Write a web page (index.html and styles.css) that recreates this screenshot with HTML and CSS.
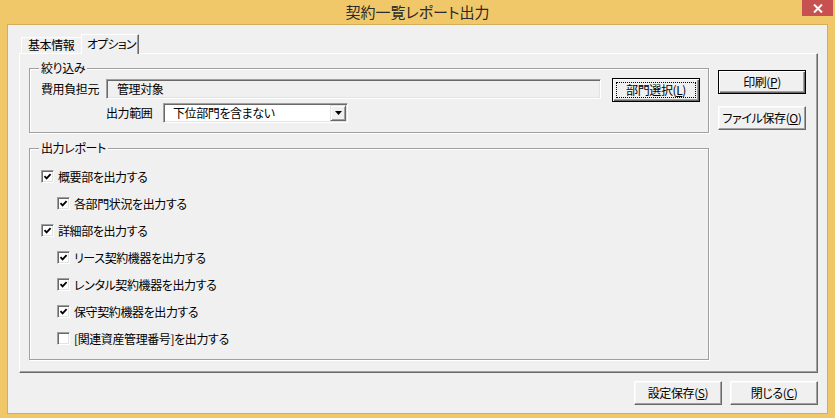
FILE: index.html
```html
<!DOCTYPE html>
<html lang="ja">
<head>
<meta charset="utf-8">
<title>契約一覧レポート出力</title>
<link rel="stylesheet" href="styles.css">
</head>
<body>
<div class="window">
  <div class="titlebar">
    <span></span>
    <div class="title">契約一覧レポート出力</div>
    <div class="close">
      <svg width="10" height="9" viewBox="0 0 10 9"><path d="M1 0.5 L9 8.5 M9 0.5 L1 8.5" stroke="#fff" stroke-width="2" fill="none"/></svg>
    </div>
  </div>
  <div class="client">
    <div class="tabs">
      <div class="tab">基本情報</div>
      <div class="tab active">オプション</div>
    </div>
    <div class="panel">
      <div class="groups">
        <div class="group g1">
          <span class="legend">絞り込み</span>
          <div class="row r1">
            <span class="lbl">費用負担元</span>
            <div class="field">管理対象</div>
            <button class="btn default focus">部門選択(<u>L</u>)</button>
          </div>
          <div class="row r2">
            <span class="lbl">出力範囲</span>
            <div class="combo">
              <span class="combo-text">下位部門を含まない</span>
              <span class="combo-btn"><svg width="7" height="4" viewBox="0 0 7 4"><path d="M0 0 H7 L3.5 4 Z" fill="#000"/></svg></span>
            </div>
          </div>
        </div>
        <div class="group g2">
          <span class="legend">出力レポート</span>
          <div class="chk"><span class="box on"><svg width="9" height="9" viewBox="0 0 9 9"><path d="M1.5 4.2 L3.6 6.4 L7.6 2.2" stroke="#000" stroke-width="1.8" fill="none"/></svg></span><span>概要部を出力する</span></div>
          <div class="chk sub"><span class="box on"><svg width="9" height="9" viewBox="0 0 9 9"><path d="M1.5 4.2 L3.6 6.4 L7.6 2.2" stroke="#000" stroke-width="1.8" fill="none"/></svg></span><span>各部門状況を出力する</span></div>
          <div class="chk"><span class="box on"><svg width="9" height="9" viewBox="0 0 9 9"><path d="M1.5 4.2 L3.6 6.4 L7.6 2.2" stroke="#000" stroke-width="1.8" fill="none"/></svg></span><span>詳細部を出力する</span></div>
          <div class="chk sub"><span class="box on"><svg width="9" height="9" viewBox="0 0 9 9"><path d="M1.5 4.2 L3.6 6.4 L7.6 2.2" stroke="#000" stroke-width="1.8" fill="none"/></svg></span><span>リース契約機器を出力する</span></div>
          <div class="chk sub"><span class="box on"><svg width="9" height="9" viewBox="0 0 9 9"><path d="M1.5 4.2 L3.6 6.4 L7.6 2.2" stroke="#000" stroke-width="1.8" fill="none"/></svg></span><span>レンタル契約機器を出力する</span></div>
          <div class="chk sub"><span class="box on"><svg width="9" height="9" viewBox="0 0 9 9"><path d="M1.5 4.2 L3.6 6.4 L7.6 2.2" stroke="#000" stroke-width="1.8" fill="none"/></svg></span><span>保守契約機器を出力する</span></div>
          <div class="chk sub"><span class="box"></span><span>[関連資産管理番号]を出力する</span></div>
        </div>
      </div>
      <div class="side">
        <button class="btn default">印刷(<u>P</u>)</button>
        <button class="btn">ファイル保存(<u>O</u>)</button>
      </div>
    </div>
    <div class="footer">
      <button class="btn">設定保存(<u>S</u>)</button>
      <button class="btn">閉じる(<u>C</u>)</button>
    </div>
  </div>
</div>
</body>
</html>
```
FILE: styles.css
```css
* { box-sizing: border-box; }

html, body {
  margin: 0;
  padding: 0;
}

body {
  width: 835px;
  height: 418px;
  overflow: hidden;
  background: #f0c86a;
  font-family: "Noto Sans CJK JP", "Noto Sans", sans-serif;
  font-size: 12px;
  font-feature-settings: "palt";
  letter-spacing: -0.4px;
  color: #000;
}

.window {
  display: flex;
  flex-direction: column;
  height: 418px;
}

.titlebar {
  height: 24px;
  display: grid;
  grid-template-columns: 1fr auto 1fr;
  align-items: center;
}

.title {
  font-size: 15px;
  line-height: 18px;
  letter-spacing: 0;
  color: #2a2a2a;
}

.close {
  justify-self: end;
  align-self: start;
  width: 31px;
  height: 16px;
  margin-right: 2px;
  background: #c75050;
  display: flex;
  align-items: center;
  justify-content: center;
}

.client {
  margin: 0 7px 4px 7px;
  border: 1px solid #d6ae58;
  background: #f0f0f0;
  height: 390px;
  padding: 9px 9px 8px 11px;
  display: flex;
  flex-direction: column;
}

.tabs {
  display: flex;
  align-items: flex-end;
  height: 19px;
  padding-left: 2px;
  position: relative;
  z-index: 1;
}

.tab {
  height: 16px;
  line-height: 14px;
  padding: 0 6px;
  background: #f0f0f0;
  border-top: 1px solid #fff;
  border-left: 1px solid #fff;
  width: 60px;
  white-space: nowrap;
}

.tab.active {
  height: 20px;
  width: 58px;
  margin-bottom: -1px;
  line-height: 17px;
  border-right: 1px solid #696969;
  box-shadow: inset -1px 0 #a0a0a0;
  padding-left: 5px;
  letter-spacing: -0.8px;
}

.panel {
  height: 320px;
  width: 799px;
  border: 1px solid;
  border-color: #fff #696969 #696969 #fff;
  box-shadow: inset -1px -1px #a0a0a0;
  padding: 14px 0 0 9px;
  display: flex;
  gap: 9px;
}

.groups {
  width: 680px;
  display: flex;
  flex-direction: column;
}

.group {
  position: relative;
  border: 1px solid #a0a0a0;
  box-shadow: inset 1px 1px #fff, 1px 1px #fff;
}

.legend {
  position: absolute;
  top: -8px;
  left: 9px;
  padding: 0 2px;
  line-height: 14px;
  background: #f0f0f0;
}

.g1 {
  height: 65px;
  padding: 9px 0 0 11px;
}

.g2 {
  height: 212px;
  margin-top: 15px;
  padding: 14px 0 0 11px;
}

.row {
  display: flex;
  align-items: flex-start;
}

.r1 .lbl {
  width: 60px;
  margin-top: 1px;
  line-height: 20px;
  white-space: nowrap;
}

.field {
  width: 495px;
  height: 20px;
  margin: 1px 0 0 5px;
  padding-left: 10px;
  line-height: 17px;
  background: #f0f0f0;
  border: 1px solid;
  border-color: #a0a0a0 #fff #fff #a0a0a0;
  box-shadow: inset 1px 1px #696969, inset -1px -1px #e3e3e3;
}

.r1 .btn {
  margin-left: 11px;
}

.r2 {
  margin-top: 1px;
  padding-left: 65px;
}

.r2 .lbl {
  width: 48px;
  line-height: 20px;
  white-space: nowrap;
}

.combo {
  width: 185px;
  height: 20px;
  margin-left: 9px;
  background: #fff;
  border: 1px solid;
  border-color: #a0a0a0 #fff #fff #a0a0a0;
  box-shadow: inset 1px 1px #696969, inset -1px -1px #e3e3e3;
  display: flex;
  align-items: center;
  padding: 1px 1px 1px 9px;
}

.combo-text {
  flex: 1;
  line-height: 16px;
}

.combo-btn {
  width: 16px;
  height: 16px;
  background: #f0f0f0;
  border: 1px solid;
  border-color: #e3e3e3 #696969 #696969 #e3e3e3;
  box-shadow: inset 1px 1px #fff, inset -1px -1px #a0a0a0;
  display: flex;
  align-items: center;
  justify-content: center;
}

.chk {
  height: 27px;
  display: flex;
  align-items: center;
  gap: 4px;
  line-height: 14px;
}

.chk.sub {
  padding-left: 16px;
}

.box {
  width: 13px;
  height: 13px;
  background: #fff;
  border: 1px solid;
  border-color: #a0a0a0 #fff #fff #a0a0a0;
  box-shadow: inset 1px 1px #696969, inset -1px -1px #e3e3e3;
  display: flex;
  align-items: center;
  justify-content: center;
  flex: none;
}

.side {
  width: 88px;
  padding-top: 2px;
  display: flex;
  flex-direction: column;
  gap: 12px;
}

.btn {
  width: 88px;
  height: 24px;
  padding: 0;
  margin: 0;
  font-family: "Noto Sans CJK JP", "Noto Sans", sans-serif;
  font-size: 12px;
  font-feature-settings: "palt";
  letter-spacing: -0.4px;
  line-height: 20px;
  color: #000;
  background: #f0f0f0;
  border: 1px solid;
  border-color: #fff #696969 #696969 #fff;
  box-shadow: inset -1px -1px #a0a0a0, inset 1px 1px #f8f8f8;
  flex: none;
}

.btn.default {
  border: 1px solid #000;
  box-shadow: inset 1px 1px #fff, inset -1px -1px #696969, inset -2px -2px #a0a0a0;
}

.btn.focus {
  outline: 1px dotted #000;
  outline-offset: -5px;
}

.btn u {
  text-decoration: underline;
  text-underline-offset: 1px;
}

.footer {
  margin-top: 8px;
  display: flex;
  justify-content: flex-end;
  gap: 8px;
}
```
